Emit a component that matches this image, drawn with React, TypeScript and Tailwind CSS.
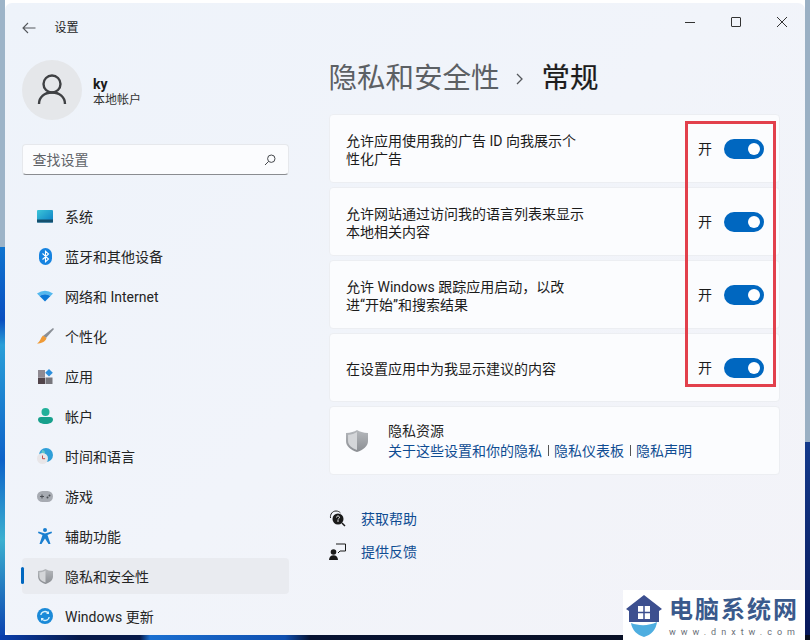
import type { ReactNode } from "react"

const SystemIcon = () => (
  <svg width="16" height="13" viewBox="0 0 16 13">
    <defs>
      <linearGradient id="sys" x1="0" y1="0" x2="1" y2="1">
        <stop offset="0" stopColor="#3cc6d8" />
        <stop offset="1" stopColor="#0a7cc4" />
      </linearGradient>
    </defs>
    <rect width="16" height="12.5" rx="1" fill="url(#sys)" />
    <rect y="9.5" width="16" height="3" fill="#14506e" />
  </svg>
)

const BluetoothIcon = () => (
  <svg width="13" height="17" viewBox="0 0 13 17">
    <rect width="13" height="17" rx="6.5" fill="#1683e0" />
    <path d="M3.5 5.5l6 5.5-3 2.8V3.2l3 2.8-6 5.5" fill="none" stroke="#fff" strokeWidth="1.1" />
  </svg>
)

const WifiIcon = () => (
  <svg width="16" height="12" viewBox="0 0 16 12">
    <path d="M0 3.5Q8-2 16 3.5L13.5 6Q8 2.5 2.5 6z" fill="#53b8ee" />
    <path d="M2.5 6Q8 2.5 13.5 6L8 11.5z" fill="#0b78d6" />
  </svg>
)

const BrushIcon = () => (
  <svg width="17" height="16" viewBox="0 0 17 16">
    <path d="M16 0l1 1-8 9-3-2z" fill="#8a8f96" />
    <path d="M6 7.5l3.5 2.5C8.5 14 4 15.5 0 15.5 3 14 3.5 10 6 7.5z" fill="#ef9a36" />
  </svg>
)

const AppsIcon = () => (
  <svg width="15" height="15" viewBox="0 0 15 15">
    <rect y="1" width="7" height="7" fill="#8f8a92" />
    <rect y="8.5" width="7" height="6.5" fill="#51444a" />
    <rect x="7.5" y="8.5" width="7" height="6.5" fill="#77767c" />
    <path d="M11 0l3.8 3.8L11 7.6 7.2 3.8z" fill="#2c8fdc" />
  </svg>
)

const AccountIcon = () => (
  <svg width="15" height="16" viewBox="0 0 15 16">
    <circle cx="7.5" cy="4" r="4" fill="#22b09a" />
    <path d="M0 11.5C0 9.8 1.3 9 3 9h9c1.7 0 3 .8 3 2.5C15 14.500 11.500 16 7.500 16S0 14.500 0 11.500z" fill="#17a08c" />
  </svg>
)

const TimeIcon = () => (
  <svg width="16" height="16" viewBox="0 0 16 16">
    <circle cx="9" cy="7" r="7" fill="#2f9fd8" />
    <path d="M5 2c2 0 3 1 3 3s-2 2-4 2z" fill="#63c7c9" />
    <circle cx="5.5" cy="10.5" r="5.5" fill="#e8e6e8" />
    <path d="M5.5 7.5v3.2h2.6" fill="none" stroke="#c0504d" strokeWidth="1" />
  </svg>
)

const GameIcon = () => (
  <svg width="16" height="11" viewBox="0 0 16 11">
    <rect width="16" height="11" rx="5.5" fill="#a7abb2" />
    <path d="M3 5.5h4M5 3.5v4" stroke="#4b4f55" strokeWidth="1" />
    <circle cx="10.5" cy="6.5" r="1" fill="#4b4f55" />
    <circle cx="12.5" cy="4.5" r="1" fill="#4b4f55" />
  </svg>
)

const AccessIcon = () => (
  <svg width="14" height="16" viewBox="0 0 14 16">
    <circle cx="7" cy="2" r="2" fill="#1a7fd0" />
    <path d="M0.5 3.5L7 5.5l6.5-2 .5 1.5L9.500 7l3 9h-2L7 10.500 3.500 16h-2l3-9L0 5z" fill="#1a7fd0" />
  </svg>
)

const ShieldIcon = ({ size = 15 }: { size?: number }) => (
  <svg width={size} height={size} viewBox="0 0 16 16">
    <defs>
      <linearGradient id="shieldA" x1="0" y1="0" x2="0" y2="1">
        <stop offset="0" stopColor="#b5b8bc" />
        <stop offset="1" stopColor="#8b8e93" />
      </linearGradient>
    </defs>
    <path d="M8 0c2 1.300 4.500 2 8 2.200V8c0 4-3.500 6.500-8 8-4.500-1.500-8-4-8-8V2.200C3.500 2 6 1.300 8 0z" fill="url(#shieldA)" />
    <path d="M8 1.500v13c-3.500-1.300-6.500-3.200-6.500-6.500V3.500C4 3.300 6.300 2.700 8 1.500z" fill="#d4d6d9" />
  </svg>
)

const UpdateIcon = () => (
  <svg width="16" height="16" viewBox="0 0 16 16">
    <circle cx="8" cy="8" r="8" fill="#1b8ad8" />
    <path d="M3.800 7A4.300 4.300 0 0 1 11.500 5.300M12.200 9A4.300 4.300 0 0 1 4.500 10.700" fill="none" stroke="#d9f1fb" strokeWidth="1.300" />
    <path d="M12 3v3H9zM4 13v-3h3z" fill="#d9f1fb" />
  </svg>
)

const navItems: { label: string; icon: ReactNode; active?: boolean }[] = [
  { label: "系统", icon: <SystemIcon /> },
  { label: "蓝牙和其他设备", icon: <BluetoothIcon /> },
  { label: "网络和 Internet", icon: <WifiIcon /> },
  { label: "个性化", icon: <BrushIcon /> },
  { label: "应用", icon: <AppsIcon /> },
  { label: "帐户", icon: <AccountIcon /> },
  { label: "时间和语言", icon: <TimeIcon /> },
  { label: "游戏", icon: <GameIcon /> },
  { label: "辅助功能", icon: <AccessIcon /> },
  { label: "隐私和安全性", icon: <ShieldIcon />, active: true },
  { label: "Windows 更新", icon: <UpdateIcon /> },
]

const settings = [
  ["允许应用使用我的广告 ID 向我展示个", "性化广告"],
  ["允许网站通过访问我的语言列表来显示", "本地相关内容"],
  ["允许 Windows 跟踪应用启动，以改", "进“开始”和搜索结果"],
  ["在设置应用中为我显示建议的内容"],
]

function SettingCard({ lines }: { lines: string[] }) {
  return (
    <div className="flex h-[69px] items-center justify-between rounded-[4px] border border-[#eceef2] bg-[#fbfcfe] pl-[16px] pr-[15px]">
      <div className="pt-[3px] text-[14px] leading-[18px] text-[#1b1b1b]">
        {lines.map((line) => (
          <div key={line}>{line}</div>
        ))}
      </div>
      <div className="flex items-center">
        <span className="mr-[12px] pt-[2px] text-[14px] text-[#1b1b1b]">开</span>
        <div className="flex h-[20px] w-[40px] items-center justify-end rounded-full bg-[#0067c0] pr-[4px]">
          <div className="h-[12px] w-[12px] rounded-full bg-white" />
        </div>
      </div>
    </div>
  )
}

export default function App() {
  return (
    <div className="relative h-[640px] w-[810px] overflow-hidden bg-[#0a1430] [background:linear-gradient(90deg,#0a3fae_0px,#071a4a_80px,#071a4a_140px,#1a6fd0_150px,#0f4fb0_285px,#061232_310px,#0a0f1e_100%)_bottom/100%_5px_no-repeat,linear-gradient(180deg,#9ab0c4_442px,#143a8c_442px,#08185a_100%)_right/5px_100%_no-repeat,linear-gradient(180deg,#9db4c8_247px,#0f74cf_247px,#0a4fc0_320px,#2a9fd8_345px,#0d62c8_460px,#3cb0d0_540px,#0a3fae_640px)_left/5px_100%_no-repeat] pb-[5px] pl-[5px] pr-[5px] pt-[3px] font-['Roboto','Noto_Sans_CJK_SC',sans-serif]">
      <div className="flex h-[632px] overflow-hidden rounded-[7px] bg-[linear-gradient(135deg,#eef3fa_0%,#f1f4fa_50%,#f3f3f8_100%)]">
        <aside className="flex w-[304px] shrink-0 flex-col pl-[16.500px]">
          <div className="flex h-[48px] items-center pt-[1px]">
            <svg width="14" height="12" viewBox="0 0 14 12" fill="none" stroke="#55585c" strokeWidth="1.100">
              <path d="M13.500 6H1M6 1L1 6l5 5" />
            </svg>
            <span className="ml-[19px] text-[12px] text-[#1f1f1f]">设置</span>
          </div>

          <div className="mt-[9px] flex items-center">
            <div className="flex h-[60px] w-[60px] items-center justify-center rounded-full bg-[#e5e7ea]">
              <svg width="30" height="32" viewBox="0 0 30 32" fill="none" stroke="#3f4144" strokeWidth="2.400">
                <circle cx="15" cy="10" r="8.500" />
                <path d="M2 30c0-7 5.500-11.500 13-11.500S28 23 28 30" />
              </svg>
            </div>
            <div className="ml-[11.500px] pt-[5px]">
              <div className="text-[14px] font-bold leading-[16px] text-[#1a1a1a]">ky</div>
              <div className="text-[12px] leading-[17px] text-[#333]">本地帐户</div>
            </div>
          </div>

          <div className="mt-[24px] flex h-[31px] w-[267px] items-center justify-between rounded-[4px] border border-[#e6e8ec] border-b-[#8a8c90] bg-[#fbfcfe] pl-[10px] pr-[12px]">
            <span className="pt-[2px] text-[14px] text-[#5f6368]">查找设置</span>
            <svg width="12" height="12" viewBox="0 0 12 12" fill="none" stroke="#45484c" strokeWidth="1">
              <circle cx="7.300" cy="4.700" r="3.700" />
              <path d="M4.600 7.400L1 11" />
            </svg>
          </div>

          <nav className="mt-[23px] flex flex-col gap-[4px]">
            {navItems.map((item) => (
              <div
                key={item.label}
                className={
                  item.active
                    ? "relative flex h-[36px] w-[267px] items-center rounded-[4px] bg-[#e9ebf0]"
                    : "relative flex h-[36px] w-[267px] items-center"
                }
              >
                {item.active && (
                  <div className="absolute left-[-1px] top-[9px] h-[17px] w-[3px] rounded-full bg-[#0067c0]" />
                )}
                <div className="flex w-[43.500px] shrink-0 justify-center pl-[4px]">{item.icon}</div>
                <span className="pt-[2px] text-[14px] text-[#242424]">{item.label}</span>
              </div>
            ))}
          </nav>
        </aside>

        <main className="flex-1 pl-[20px] pr-[25px]">
          <div className="flex h-[38px] items-center justify-end">
            <div className="flex items-center">
              <div className="mr-[36px] h-px w-[10px] bg-[#333]" />
              <div className="mr-[36px] h-[10px] w-[10px] rounded-[1px] border border-[#333]" />
              <svg className="mr-[-7px]" width="10" height="10" viewBox="0 0 10 10" stroke="#333" strokeWidth="1">
                <path d="M0 0l10 10M10 0L0 10" />
              </svg>
            </div>
          </div>

          <div className="mt-[13px] flex h-[48px] items-center">
            <span className="ml-[-0.500px] pt-[2px] text-[28.500px] text-[#5c6064]">隐私和安全性</span>
            <svg className="ml-[16px] mt-[2px]" width="8" height="12" viewBox="0 0 8 12" fill="none" stroke="#55585c" strokeWidth="1.300">
              <path d="M1 1l5 5-5 5" />
            </svg>
            <span className="ml-[18px] pt-[2px] text-[28.500px] text-[#1c1c1c] [-webkit-text-stroke:0.2px_#1c1c1c]">常规</span>
          </div>

          <div className="mt-[12px] flex flex-col gap-[4px]">
            {settings.map((lines) => (
              <SettingCard key={lines[0]} lines={lines} />
            ))}
            <div className="flex h-[69px] items-center rounded-[4px] border border-[#eceef2] bg-[#fbfcfe] pl-[16px]">
              <ShieldIcon size={22} />
              <div className="ml-[20px]">
                <div className="text-[14px] leading-[20px] text-[#1f1f1f]">隐私资源</div>
                <div className="flex items-center text-[14px] leading-[20px] text-[#0f4c92]">
                  <span>关于这些设置和你的隐私</span>
                  <span className="mx-[5.500px] h-[11px] w-px bg-[#555]" />
                  <span>隐私仪表板</span>
                  <span className="mx-[5.500px] h-[11px] w-px bg-[#555]" />
                  <span>隐私声明</span>
                </div>
              </div>
            </div>
          </div>

          <div className="mt-[27px] flex h-[33px] items-center">
            <svg width="17" height="17" viewBox="0 0 17 17">
              <path d="M1.500 8C1 4 3.500 1 7 1c2 0 3.500.8 4.500 2" fill="none" stroke="#222" strokeWidth="1" />
              <circle cx="9" cy="9" r="5.500" fill="#1a1a1a" />
              <path d="M13 13l3 3" stroke="#1a1a1a" strokeWidth="1.500" />
              <circle cx="9" cy="11" r=".8" fill="#fff" />
              <path d="M7.500 7.500c0-2 3-2 3 0 0 1-1.500 1-1.500 2" fill="none" stroke="#fff" strokeWidth=".9" />
            </svg>
            <span className="ml-[15px] pt-[2px] text-[14px] text-[#0f4c92]">获取帮助</span>
          </div>
          <div className="flex h-[33px] items-center">
            <svg width="17" height="17" viewBox="0 0 17 17">
              <path d="M7 1h9.500v7H11l-2 2" fill="none" stroke="#1a1a1a" strokeWidth="1" />
              <circle cx="4.500" cy="9" r="2.800" fill="#1a1a1a" />
              <path d="M0 17c0-3 2-4.800 4.500-4.800S9 14 9 17z" fill="#1a1a1a" />
            </svg>
            <span className="ml-[15px] pt-[2px] text-[14px] text-[#0f4c92]">提供反馈</span>
          </div>
        </main>
      </div>

      {/* annotation drawn over the toggles */}
      <div className="absolute left-[685px] top-[121px] h-[266px] w-[91px] border-[3px] border-[#e2404c]" />

      {/* watermark */}
      <div className="absolute left-[623px] top-[590px] flex h-[50px] w-[182px] bg-white">
        <svg className="ml-[3px] mt-[4px] shrink-0" width="36" height="44" viewBox="0 0 36 44">
          <path d="M18 1L36 15l-3 2v11H3V17l-3-2z" fill="#3c4f8f" />
          <rect x="12" y="12" width="12" height="13" fill="#fff" />
          <path d="M18 12v13M12 18.500h12" stroke="#3c4f8f" strokeWidth="1.500" />
          <path d="M5 29c8 3 18 3 26-1-1 8-6 13-13 15C11 41 6 36 5 29z" fill="#4faee0" />
        </svg>
        <div className="ml-[7px] flex flex-col">
          <div className="mt-[6px] whitespace-nowrap font-['Noto_Sans_CJK_SC',sans-serif] text-[24px] font-bold leading-[24px] tracking-[2px] text-[#3a5a8c]">电脑系统网</div>
          <div className="mt-[6px] whitespace-nowrap text-[9px] leading-[12px] tracking-[5px] text-[#6a6f78]">www.dnxtw.com</div>
        </div>
      </div>
    </div>
  )
}
